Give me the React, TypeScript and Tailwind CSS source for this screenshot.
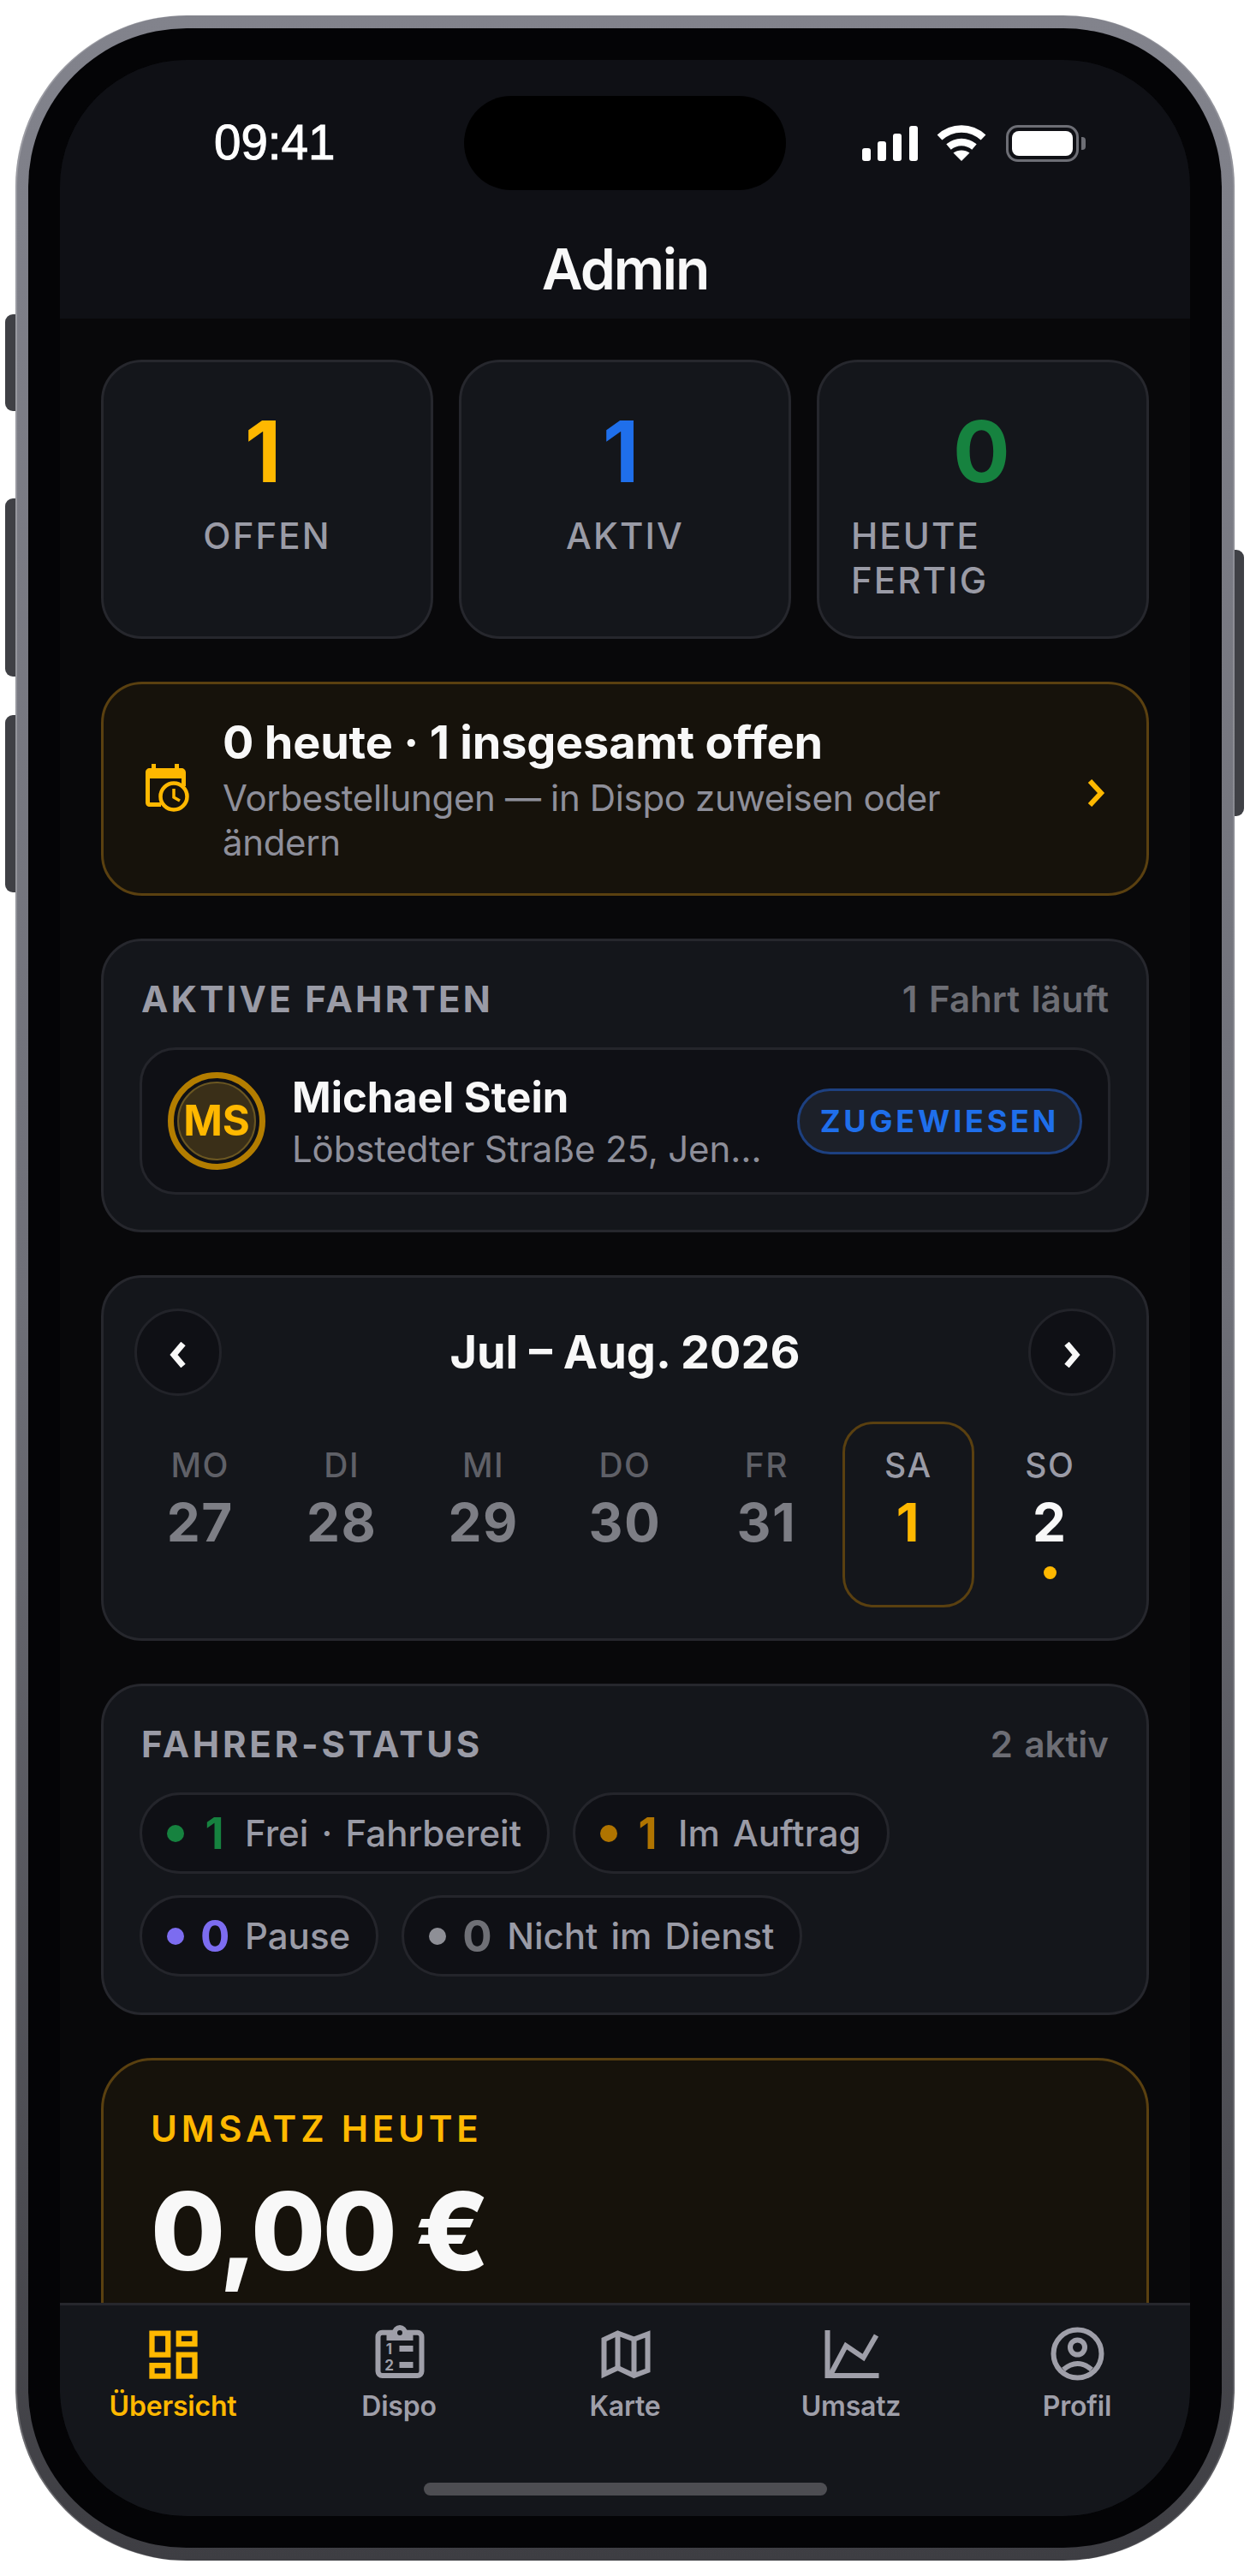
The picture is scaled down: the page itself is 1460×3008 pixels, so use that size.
import React from "react";

const font = { fontFamily: "Inter, 'Liberation Sans', sans-serif" };

function Stat({ value, color, label, shift }: { value: string; color: string; label: React.ReactNode; shift?: boolean }) {
  return (
    <div className="flex h-[326px] flex-col items-center rounded-[48px] border-[3px] border-[#26272d] bg-[#14161b] px-[37px] pt-[49px]">
      <div className={`${shift ? "-ml-[10px]" : "-ml-[3px]"} text-[99px] leading-[110px] font-bold ${color}`}>{value}</div>
      <div className="mt-[18px] text-[42px] leading-[52px] font-medium tracking-[2.1px] text-[#9a9ba6]">{label}</div>
    </div>
  );
}

function SectionHead({ title, right, spacing }: { title: string; right: string; spacing: string }) {
  return (
    <div className="mb-[30px] flex items-center justify-between px-[2px]">
      <span className={`text-[42px] leading-[52px] font-bold ${spacing} text-[#9a9ba6]`}>{title}</span>
      <span className="text-[42px] leading-[52px] font-semibold [word-spacing:3px] text-[#6d6e75]">{right}</span>
    </div>
  );
}

function Pill({ dot, numColor, num, label }: { dot: string; numColor: string; num: string; label: string }) {
  return (
    <div className="flex h-[95px] items-center rounded-full border-[3px] border-[#24252b] bg-[#0f1015] pr-[30px] pl-[29px]">
      <span className={`mr-[19px] h-[20px] w-[20px] rounded-full ${dot}`} />
      <span className={`mr-[19px] w-[33px] text-center text-[51px] leading-[60px] font-bold ${numColor}`}>{num}</span>
      <span className="text-[42px] leading-[52px] font-medium [word-spacing:4px] text-[#9a9ba6]">{label}</span>
    </div>
  );
}

function Day({ d, n, past, selected, dot }: { d: string; n: string; past?: boolean; selected?: boolean; dot?: boolean }) {
  return (
    <div className={`flex h-[217px] flex-col items-center rounded-[36px] border-[3px] pt-[24px] ${selected ? "border-[#5a4010]" : "border-transparent"}`}>
      <span className={`text-[39px] leading-[48px] font-medium tracking-[1.5px] ${past ? "text-[#5f6067]" : "text-[#9a9ba6]"}`}>{d}</span>
      <span className={`mt-[7px] text-[62px] leading-[72px] font-bold tracking-[1.5px] ${selected ? "text-[#ffb800]" : past ? "text-[#7d7e85]" : "text-[#f8f8f8]"}`}>{n}</span>
      {dot && <span className="mt-[15px] h-[15px] w-[15px] rounded-full bg-[#ffb800]" />}
    </div>
  );
}

function NavButton({ dir }: { dir: "l" | "r" }) {
  return (
    <div className="flex h-[102px] w-[102px] items-center justify-center rounded-full border-[3px] border-[#222329] bg-[#0f1015]">
      <svg width="24" height="30" viewBox="0 0 24 30" className="mt-[6px]" fill="none" stroke="#f8f8f8" strokeWidth="7">
        <polyline points={dir === "l" ? "18,2 7,15 18,28" : "6,2 17,15 6,28"} />
      </svg>
    </div>
  );
}

function Tab({ label, active, children }: { label: string; active?: boolean; children: React.ReactNode }) {
  return (
    <div className={`flex flex-col items-center pt-[20px] ${active ? "text-[#ffb800]" : "text-[#9f9fa9]"}`}>
      {children}
      <span className="mt-[5px] text-[32px] leading-[36px] font-semibold tracking-[-0.2px]">{label}</span>
    </div>
  );
}

function Icon({ children }: { children: React.ReactNode }) {
  return (
    <svg width="75" height="75" viewBox="0 0 75 75" fill="none" stroke="currentColor" strokeWidth="6">
      {children}
    </svg>
  );
}

export default function App() {
  return (
    <div className="relative h-[3008px] w-[1460px] overflow-hidden bg-white pt-[18px] pl-[18px]" style={font}>
      <div className="absolute top-[367px] left-[6px] h-[113px] w-[14px] rounded-l-[9px] bg-[#3f4045]" />
      <div className="absolute top-[582px] left-[6px] h-[208px] w-[14px] rounded-l-[9px] bg-[#3f4045]" />
      <div className="absolute top-[835px] left-[6px] h-[207px] w-[14px] rounded-l-[9px] bg-[#3f4045]" />
      <div className="absolute top-[642px] left-[1440px] h-[311px] w-[13px] rounded-r-[9px] bg-[#3f4045]" />

      <div className="relative h-[2972px] w-[1424px] rounded-[200px] bg-gradient-to-b from-[#82838c] via-[#6f7078] to-[#3e3e43] p-[15px] shadow-[inset_2px_0_0_rgba(255,255,255,0.22),inset_-2px_0_0_rgba(255,255,255,0.15)]">
        <div className="h-full rounded-[185px] bg-[#040406] p-[37px]">
          <div className="relative flex h-full flex-col overflow-hidden rounded-[148px] bg-[#08080a]">
            <div className="absolute top-[42px] left-[472px] z-10 h-[110px] w-[376px] rounded-full bg-black" />

            {/* header */}
            <div className="h-[302px] shrink-0 bg-[#0f1015] pt-[42px]">
              <div className="flex h-[110px] items-center justify-between pr-[122px] pl-[180px]">
                <span className="text-[56.5px] leading-[60px] text-white [-webkit-text-stroke:1px_white]" style={{ fontFamily: "'Liberation Sans', sans-serif" }}>09:41</span>
                <div className="flex items-center">
                  <svg width="65" height="41" viewBox="0 0 65 41" fill="#fff">
                    <rect x="0" y="26" width="10" height="15" rx="3" />
                    <rect x="18" y="18" width="10" height="23" rx="3" />
                    <rect x="36" y="9" width="10" height="32" rx="3" />
                    <rect x="55" y="0" width="10" height="41" rx="3" />
                  </svg>
                  <svg width="58" height="42" viewBox="0 0 58 42" className="ml-[22px]" fill="none" stroke="#fff" strokeWidth="8.5">
                    <path d="M3.500 14.500 C18 1, 40 1, 54.500 14.500" />
                    <path d="M14 25.500 C23 18, 35 18, 44 25.500" />
                    <path d="M29 42 L19.500 32.500 C25 28.500, 33 28.500, 38.500 32.500 Z" fill="#fff" stroke="none" />
                  </svg>
                  <div className="ml-[23px] flex h-[43px] w-[85px] items-center justify-center rounded-[14px] border-[3.5px] border-[#6d6e75]">
                    <div className="h-[29px] w-[71px] rounded-[8px] bg-white" />
                  </div>
                  <div className="ml-[3px] h-[15px] w-[5px] rounded-r-[4px] bg-[#6d6e75]" />
                </div>
              </div>
              <div className="mt-[52px] text-center text-[66px] leading-[80px] font-semibold tracking-[-2.2px] text-[#f8f8f8]">Admin</div>
            </div>

            {/* body */}
            <div className="flex min-h-0 flex-1 flex-col gap-[50px] overflow-hidden px-[48px] pt-[48px]">
              <div className="grid shrink-0 grid-cols-3 gap-[30px]">
                <Stat value="1" shift color="text-[#ffb800]" label="OFFEN" />
                <Stat value="1" shift color="text-[#1f6feb]" label="AKTIV" />
                <Stat value="0" color="text-[#16823f]" label="HEUTE FERTIG" />
              </div>

              <div className="flex h-[250px] shrink-0 items-center rounded-[48px] border-[3px] border-[#5a4010] bg-[#16120b] pr-[47px] pl-[49px]">
                <svg width="52" height="56" viewBox="0 0 52 56" className="mt-[-2px] shrink-0">
                  <path d="M7 0h5v5h22V0h5v5h3c2.500 0 5 2 5 5v16h-5V17H5v28h13v5H5c-3 0-5-2-5-5V10c0-3 2-5 5-5h2z" fill="#ffb800" />
                  <circle cx="33" cy="38" r="15.500" fill="none" stroke="#ffb800" strokeWidth="4.500" />
                  <path d="M33 29v10l7 4" fill="none" stroke="#ffb800" strokeWidth="3.500" />
                </svg>
                <div className="ml-[38px] min-w-0 flex-1 pt-[1px]">
                  <div className="text-[54px] leading-[66px] font-bold tracking-[-0.2px] text-[#f8f8f8]">0 heute · 1 insgesamt offen</div>
                  <div className="mt-[6px] max-w-[960px] text-[42px] leading-[52px] font-normal tracking-[-0.35px] text-[#8e8f9a]">Vorbestellungen — in Dispo zuweisen oder ändern</div>
                </div>
                <svg width="22" height="32" viewBox="0 0 22 32" className="mt-[10px] ml-[31px] shrink-0" fill="none" stroke="#ffb800" strokeWidth="6">
                  <polyline points="3,2 16,16 3,30" />
                </svg>
              </div>

              <div className="h-[343px] shrink-0 rounded-[48px] border-[3px] border-[#26272d] bg-[#14161b] px-[42px] pt-[42px]">
                <SectionHead title="AKTIVE FAHRTEN" right="1 Fahrt läuft" spacing="tracking-[3.3px]" />
                <div className="flex h-[172px] items-center gap-[30px] rounded-[42px] border-[3px] border-[#24252b] bg-[#0f1015] px-[30px]">
                  <div className="h-[114px] w-[114px] shrink-0 rounded-full border-[7px] border-[#b37d00] p-[4px]">
                    <div className="flex h-full w-full items-center justify-center rounded-full border-[2px] border-[#6b5722] bg-[#3a2f18] text-[49px] font-bold text-[#ffb800]">MS</div>
                  </div>
                  <div className="min-w-0 flex-1 pt-[6px] pl-[1px]">
                    <div className="text-[49px] leading-[60px] font-bold text-[#f8f8f8]">Michael Stein</div>
                    <div className="truncate text-[42px] leading-[60px] tracking-[-0.15px] text-[#8e8f9a]">Löbstedter Straße 25, Jena, Deutschland</div>
                  </div>
                  <div className="flex h-[77px] shrink-0 items-center rounded-full border-[3px] border-[#1d4080] bg-[#1c2029] px-[24px] text-[36px] font-bold tracking-[3.8px] text-[#1f6feb]">ZUGEWIESEN</div>
                </div>
              </div>

              <div className="shrink-0 rounded-[48px] border-[3px] border-[#26272d] bg-[#14161b] px-[36px] py-[36px]">
                <div className="mb-[30px] flex items-center justify-between">
                  <NavButton dir="l" />
                  <span className="text-[54px] leading-[66px] font-bold text-[#f8f8f8]">Jul – Aug. 2026</span>
                  <NavButton dir="r" />
                </div>
                <div className="grid grid-cols-7 gap-[12px]">
                  <Day d="MO" n="27" past />
                  <Day d="DI" n="28" past />
                  <Day d="MI" n="29" past />
                  <Day d="DO" n="30" past />
                  <Day d="FR" n="31" past />
                  <Day d="SA" n="1" selected />
                  <Day d="SO" n="2" dot />
                </div>
              </div>

              <div className="shrink-0 rounded-[48px] border-[3px] border-[#26272d] bg-[#14161b] px-[42px] pt-[42px] pb-[42px]">
                <SectionHead title="FAHRER-STATUS" right="2 aktiv" spacing="tracking-[3.8px]" />
                <div className="flex flex-wrap gap-x-[27px] gap-y-[25px]">
                  <Pill dot="bg-[#16823f]" numColor="text-[#16823f]" num="1" label="Frei · Fahrbereit" />
                  <Pill dot="bg-[#b07400]" numColor="text-[#b07400]" num="1" label="Im Auftrag" />
                  <Pill dot="bg-[#7c6cf0]" numColor="text-[#7c6cf0]" num="0" label="Pause" />
                  <Pill dot="bg-[#8e8f96]" numColor="text-[#6f7076]" num="0" label="Nicht im Dienst" />
                </div>
              </div>

              <div className="h-[420px] shrink-0 rounded-[60px] border-[3px] border-[#5a4010] bg-[#16120b] pt-[54px] pr-[56px] pl-[55px]">
                <div className="text-[42px] leading-[52px] font-semibold tracking-[4.8px] text-[#ffb800]">UMSATZ HEUTE</div>
                <div className="mt-[27px] text-[126px] leading-[132px] font-extrabold tracking-[-3.4px] text-[#f8f8f8]">0,00 €</div>
              </div>
            </div>

            {/* tab bar */}
            <div className="grid h-[249px] shrink-0 grid-cols-5 border-t-[3px] border-[#26272d] bg-[#14161b]">
              <Tab label="Übersicht" active>
                <svg width="75" height="75" viewBox="0 0 24 24" fill="currentColor">
                  <path d="M19 5v2h-4V5h4M9 5v6H5V5h4m10 8v6h-4v-6h4M9 17v2H5v-2h4M21 3h-8v6h8V3zM11 3H3v10h8V3zm10 8h-8v10h8V11zm-10 4H3v6h8v-6z" />
                </svg>
              </Tab>
              <Tab label="Dispo">
                <Icon>
                  <rect x="12.500" y="11.700" width="51" height="50.300" rx="5" />
                  <rect x="22.500" y="11" width="31" height="10" fill="currentColor" stroke="none" />
                  <circle cx="38" cy="12" r="6" stroke="currentColor" fill="#14161b" strokeWidth="6" />
                  <rect x="37.500" y="27" width="16" height="7" fill="currentColor" stroke="none" />
                  <rect x="37.500" y="46" width="16" height="7" fill="currentColor" stroke="none" />
                  <text x="25.500" y="37" textAnchor="middle" fontSize="17" fontWeight="700" fill="currentColor" stroke="none">1</text>
                  <text x="25.500" y="56" textAnchor="middle" fontSize="17" fontWeight="700" fill="currentColor" stroke="none">2</text>
                </Icon>
              </Tab>
              <Tab label="Karte">
                <Icon>
                  <path d="M12.500 20 L28.500 12.500 L47.500 19.500 L63.500 13.500 V56 L47.500 62 L28.500 53 L12.500 60.500 Z" />
                  <path d="M28.500 12.500 V53 M47.500 19.500 V62" />
                </Icon>
              </Tab>
              <Tab label="Umsatz">
                <Icon>
                  <path d="M9.500 9 V62 H69.500" />
                  <path d="M13.500 60 L31 27 L51.500 41 L66.500 15" />
                </Icon>
              </Tab>
              <Tab label="Profil">
                <Icon>
                  <circle cx="37.500" cy="36.500" r="28" />
                  <circle cx="37.500" cy="29" r="8.500" />
                  <path d="M21 55 Q37.500 41 54 55" />
                </Icon>
              </Tab>
            </div>

            <div className="absolute bottom-[24px] left-[425px] h-[15px] w-[471px] rounded-full bg-[#4d4d52]" />
          </div>
        </div>
      </div>
    </div>
  );
}
